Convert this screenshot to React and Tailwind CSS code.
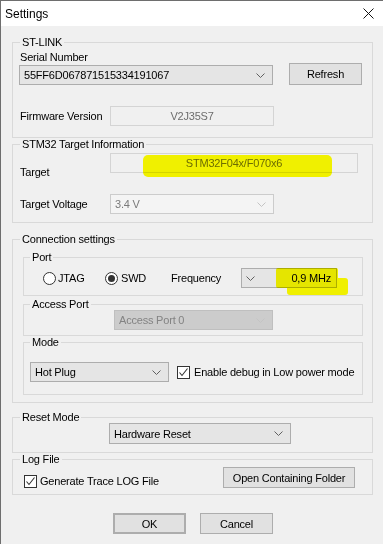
import React from 'react';
import clsx from 'clsx';

function Chevron({ light }) {
  return (
    <svg width="9" height="5" viewBox="0 0 9 5" className="shrink-0">
      <path d="M0.5 0.5 L4.5 4.5 L8.5 0.5" fill="none" stroke={light ? '#c4c4c4' : '#606060'} strokeWidth="1" />
    </svg>
  );
}

function Combo({ value, className, variant = 'normal' }) {
  const styles = {
    normal: 'border-[#adadad] bg-[#e5e5e5] text-black',
    off: 'border-[#cccccc] bg-[#f4f4f4] text-[#7a7a7a]',
    grey: 'border-[#bfbfbf] bg-[#cccccc] text-[#838383]',
  };
  return (
    <div className={clsx('flex items-center justify-between border pl-[4px] pr-[7px]', styles[variant], className)}>
      <span className="whitespace-nowrap">{value}</span>
      <Chevron light={variant !== 'normal'} />
    </div>
  );
}

function Button({ children, className }) {
  return (
    <button className={clsx('flex items-center justify-center border border-[#adadad] bg-[#e1e1e1] text-black', className)}>
      {children}
    </button>
  );
}

function Group({ label, className, legendClass, children }) {
  return (
    <fieldset className={clsx('border border-[#d9d9d9]', className)}>
      <legend className={clsx('px-[2px] leading-[12px] whitespace-nowrap', legendClass)}>{label}</legend>
      {children}
    </fieldset>
  );
}

function Check() {
  return (
    <span className="flex h-[13px] w-[13px] shrink-0 items-center justify-center border border-[#333333] bg-white">
      <svg width="11" height="11" viewBox="0 0 11 11">
        <path d="M1.5 5.5 L4 8.5 L9.5 1.5" fill="none" stroke="#333333" strokeWidth="1.1" />
      </svg>
    </span>
  );
}

function Radio({ on }) {
  return (
    <span className="flex h-[13px] w-[13px] shrink-0 items-center justify-center rounded-full border border-[#333333] bg-white">
      {on && <span className="h-[7px] w-[7px] rounded-full bg-[#333333]" />}
    </span>
  );
}

export default function App() {
  return (
    <div className="relative h-[544px] w-[383px] overflow-hidden border-l border-t border-[#6e6e6e] bg-[#f0f0f0] font-['Liberation_Sans',Arial,sans-serif] text-[11px] leading-[14px] tracking-[-0.2px] text-black">
      {/* title bar */}
      <div className="flex h-[25px] items-center justify-between bg-white pl-[4px] pr-[9px] text-[12px] tracking-normal">
        <span>Settings</span>
        <svg width="11" height="11" viewBox="0 0 11 11">
          <path d="M0.5 0.5 L10.5 10.5 M10.5 0.5 L0.5 10.5" stroke="#111" strokeWidth="1" />
        </svg>
      </div>

      <div className="px-[11px]">
        {/* ST-LINK */}
        <Group label="ST-LINK" className="mt-[10px] w-[361px] pb-[11px] pl-[7px]">
          <div className="mt-[2px] h-[14px]">Serial Number</div>
          <div className="flex h-[21px] items-end">
            <Combo value="55FF6D067871515334191067" className="-ml-[1px] h-[20px] w-[254px]" />
            <Button className="ml-[16px] h-[22px] w-[73px]">Refresh</Button>
          </div>
          <div className="mt-[21px] flex items-center">
            <span className="w-[90px]">Firmware Version</span>
            <div className="flex h-[20px] w-[164px] items-center justify-center border border-[#d4d4d4] text-[#6d6d6d]">V2J35S7</div>
          </div>
        </Group>

        {/* STM32 Target Information */}
        <Group label="STM32 Target Information" className="w-[361px] pb-[8px] pl-[7px]">
          <div className="mt-[3px] flex h-[20px] items-start">
            <span className="mt-[12px] w-[90px]">Target</span>
            <div className="flex h-[20px] w-[248px] items-center justify-center border border-[#d4d4d4] text-[#6d6d6d]">STM32F04x/F070x6</div>
          </div>
          <div className="mt-[21px] flex items-center">
            <span className="w-[90px]">Target Voltage</span>
            <Combo value="3.4 V" variant="off" className="h-[20px] w-[164px]" />
          </div>
        </Group>

        {/* Connection settings */}
        <Group label="Connection settings" className="mt-[10px] w-[361px] pb-[7px] pl-[7px]">
          <Group label="Port" className="mt-[6px] ml-[3px] w-[340px] pb-[7px]" legendClass="ml-[6px]">
            <div className="mt-[5px] flex h-[20px] items-center pl-[19px]">
              <div className="flex w-[62px] items-center gap-[2px]">
                <Radio />
                <span>JTAG</span>
              </div>
              <div className="flex w-[66px] items-center gap-[3px]">
                <Radio on />
                <span>SWD</span>
              </div>
              <span className="w-[70px]">Frequency</span>
              <div className="flex h-[20px] w-[96px] items-center justify-between border border-[#adadad] bg-[#e5e5e5] pl-[4px] pr-[5px]">
                <Chevron />
                <span>0,9 MHz</span>
              </div>
            </div>
          </Group>

          <Group label="Access Port" className="mt-[2px] ml-[3px] w-[340px] pb-[5px]" legendClass="ml-[6px]">
            <Combo value="Access Port 0" variant="grey" className="ml-[90px] h-[20px] w-[159px]" />
          </Group>

          <Group label="Mode" className="ml-[3px] w-[340px] pb-[12px]" legendClass="ml-[6px]">
            <div className="mt-[14px] flex items-center pl-[6px]">
              <Combo value="Hot Plug" className="h-[20px] w-[139px]" />
              <span className="ml-[8px]"><Check /></span>
              <span className="ml-[4px] whitespace-nowrap">Enable debug in Low power mode</span>
            </div>
          </Group>
        </Group>

        {/* Reset Mode */}
        <Group label="Reset Mode" className="mt-[8px] w-[361px] pb-[8px] pl-[7px]">
          <Combo value="Hardware Reset" className="ml-[89px] h-[21px] w-[182px]" />
        </Group>

        {/* Log File */}
        <Group label="Log File" className="w-[361px] pb-[6px] pl-[7px] pr-[17px]">
          <div className="mt-[2px] flex items-start">
            <div className="ml-[4px] mt-[7px] flex items-center gap-[3px]">
              <Check />
              <span>Generate Trace LOG File</span>
            </div>
            <Button className="ml-auto h-[21px] w-[132px]">Open Containing Folder</Button>
          </div>
        </Group>

        <div className="mt-[18px] flex">
          <Button className="ml-[101px] h-[21px] w-[73px] border-2 border-[#3d8fd6]">OK</Button>
          <Button className="ml-[14px] h-[21px] w-[73px]">Cancel</Button>
        </div>
      </div>

      {/* yellow marker strokes */}
      <div className="pointer-events-none absolute left-[142px] top-[154px] h-[22px] w-[189px] rounded-[5px] bg-[#ffff00] mix-blend-multiply" />
      <div className="pointer-events-none absolute left-[275px] top-[267px] h-[20px] w-[62px] rounded-[2px] bg-[#ffff00] mix-blend-multiply" />
      <div className="pointer-events-none absolute left-[286px] top-[277px] h-[17px] w-[61px] rounded-[3px] bg-[#ffff00] mix-blend-multiply" />
    </div>
  );
}
